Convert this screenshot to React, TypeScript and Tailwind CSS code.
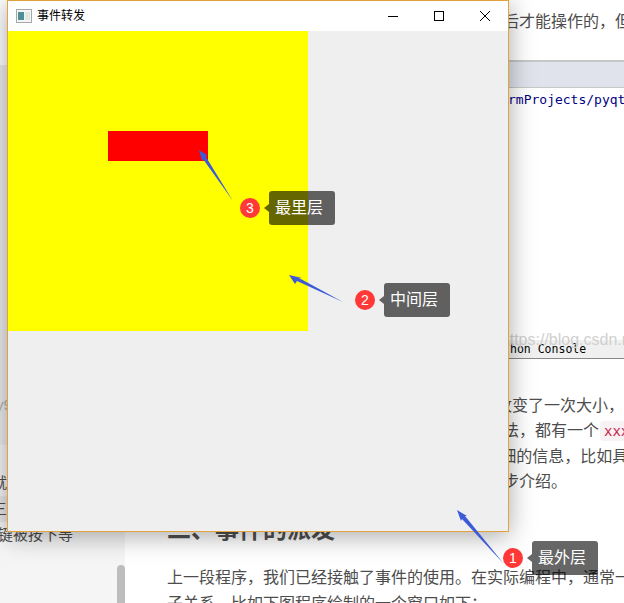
const font = "font-['Liberation_Sans','Noto_Sans_CJK_SC',sans-serif]";

function Note({ n, label, className }: { n: number; label: string; className: string }) {
  return (
    <div className={"absolute flex items-center " + className}>
      <div className="flex h-5 w-5 items-center justify-center rounded-full bg-[#ff3838] text-sm text-white">{n}</div>
      <div className="relative ml-[9px] rounded-[3px] bg-black/60 pl-1.5 pr-3 text-base leading-[34px] text-white">
        <span className="absolute left-[-5px] top-[13px] h-0 w-0 border-y-4 border-r-[5px] border-y-transparent border-r-black/60" />
        {label}
      </div>
    </div>
  );
}

function Arrow({ points }: { points: string }) {
  return <polygon points={points} fill="#3d5bd6" />;
}

export default function App() {
  return (
    <div className={"relative flex h-[603px] w-[624px] overflow-hidden bg-white " + font}>
      {/* blog behind the window */}
      <aside className="relative flex w-[125px] shrink-0 flex-col text-[15px] leading-[26px] text-[#4d4d4d]">
        <div className="h-[65px] shrink-0 bg-white" />
        <div className="flex h-[380px] shrink-0 items-end bg-[#ececec] pb-[27px] text-[#b0b0b0]">
          <span className="-ml-1">y9</span>
        </div>
        <div className="flex-1 bg-[#f5f5f5] pt-[25px]">
          <div className="-ml-2">就是说</div>
          <div className="-ml-2 bg-[#e8e8e8]">三个</div>
          <div className="-ml-0.5">键被按下等</div>
        </div>
        <div className="absolute bottom-0 right-0 h-[38px] w-2 rounded-t bg-[#bdbdbd]" />
      </aside>

      <main className="min-w-0 flex-1 pl-[42px] text-base leading-[25.6px] text-[#4d4d4d]">
        <p className="mt-[9px] whitespace-nowrap">这里的事件是需要我们在窗口上先按下左边鼠标后才能操作的，但是</p>
        <div className="mt-[25px] flex h-[299px] flex-col border-t-2 border-b border-t-[#c6c6c6] border-b-[#888888] font-['DejaVu_Sans_Mono',monospace] text-[13px] leading-[18px]">
          <div className="h-[26px] shrink-0 border-b border-[#c8c8c8] bg-[#e0e3ec]" />
          <div className="mt-[3px] whitespace-nowrap pl-[341px] text-[#000080]">rmProjects/pyqt5</div>
          <div className="relative mt-auto whitespace-nowrap bg-[#f0f0f0] pl-[343px] text-[11.5px] text-black">
            hon Console
            <span className="absolute right-[-20px] top-[-12px] font-['Liberation_Sans',sans-serif] text-base text-[#d0d0d0]">https://blog.csdn.net</span>
          </div>
        </div>
        <div className="mt-[34px] whitespace-nowrap">
          <p>运行程序后，用鼠标拖动窗口1边框，窗口也就改变了一次大小，</p>
          <p>每个事件都有对应的处理函数，这些函数和它方法，都有一个<code className="ml-px rounded-sm bg-[#f9f2f4] px-1 py-0.5 font-['DejaVu_Sans_Mono',monospace] text-sm text-[#c7254e]">xxxEvent</code></p>
          <p>参数，它是事件对象 Event，里面保存了事件详细的信息，比如具体</p>
          <p>按下了哪个键，这些内容我们都会放在后面进一步介绍。</p>
        </div>
        <h2 className="mt-[17px] whitespace-nowrap text-2xl font-bold leading-9 text-[#4f4f4f]">二、事件的派发</h2>
        <div className="mt-[17px] whitespace-nowrap">
          <p>上一段程序，我们已经接触了事件的使用。在实际编程中，通常一</p>
          <p>子关系，比如下图程序绘制的一个窗口如下：</p>
        </div>
      </main>

      {/* the Qt window on top */}
      <div className="absolute left-[7px] top-0 flex h-[532px] w-[502px] flex-col border border-[#e2a33f] shadow-[0_4px_24px_rgba(0,0,0,0.35)]">
        <div className="flex h-[30px] shrink-0 items-center bg-white pl-2">
          <svg width="16" height="14" viewBox="0 0 16 14">
            <rect x="0.5" y="0.5" width="15" height="13" fill="#f4f4f4" stroke="#a8a8a8" />
            <rect x="2" y="3" width="6" height="8" fill="#4f8f96" />
            <rect x="9" y="3" width="5" height="8" fill="#dfe8e2" />
          </svg>
          <span className="ml-[5px] text-xs text-black">事件转发</span>
          <div className="ml-auto flex items-center">
            <svg width="46" height="12" viewBox="0 0 46 12"><path d="M18 6.5h10" stroke="#000" /></svg>
            <svg width="46" height="12" viewBox="0 0 46 12"><rect x="18.5" y="1.5" width="9" height="9" fill="none" stroke="#000" /></svg>
            <svg width="46" height="12" viewBox="0 0 46 12"><path d="M18 1l10 10M28 1L18 11" stroke="#000" fill="none" /></svg>
          </div>
        </div>
        <div className="flex-1 bg-[#efefef]">
          <div className="h-[300px] w-[300px] bg-[#ffff00] pl-[100px] pt-[100px]">
            <div className="h-[30px] w-[100px] bg-[#ff0000]" />
          </div>
        </div>
      </div>

      {/* annotations */}
      <svg width="624" height="603" className="absolute left-0 top-0">
        <Arrow points="233,201 206,157 207,155 199,150 202,161 203,159" />
        <Arrow points="343,302 299,278 302,278 289,275 295,284 297,281" />
        <Arrow points="504,564 465,516 467,516 457,510 461,521 462,519" />
      </svg>
      <Note n={3} label="最里层" className="left-[240px] top-[191px]" />
      <Note n={2} label="中间层" className="left-[355px] top-[283px]" />
      <Note n={1} label="最外层" className="left-[503px] top-[541px]" />
    </div>
  );
}
